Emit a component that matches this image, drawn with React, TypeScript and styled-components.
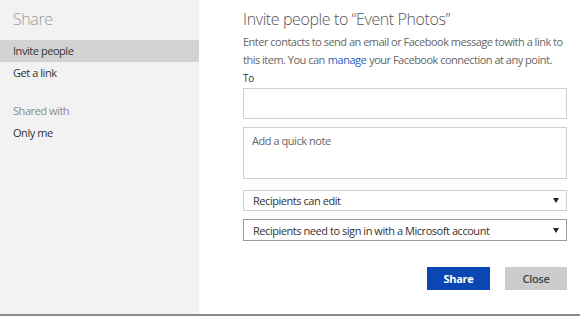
import React from "react";
import styled, { createGlobalStyle } from "styled-components";

const Global = createGlobalStyle`
  html, body { margin: 0; padding: 0; background: #fff; }
  body { font-family: "Open Sans", "Noto Sans", sans-serif; }
  * { box-sizing: border-box; }
`;

const Page = styled.div`
  width: 580px;
  height: 316px;
  display: flex;
  flex-direction: column;
  overflow: hidden;
`;

const Body = styled.div`
  flex: 1;
  display: flex;
  min-height: 0;
`;

const BottomRule = styled.div`
  height: 2px;
  background: #8a8a8a;
`;

const Sidebar = styled.nav`
  width: 199px;
  background: #f2f2f2;
  display: flex;
  flex-direction: column;
  padding-top: 8px;
`;

const SideTitle = styled.div`
  font-size: 16px;
  font-weight: 300;
  letter-spacing: -0.4px;
  color: #9a9a9a;
  padding-left: 13px;
  line-height: 22px;
  margin-bottom: 10px;
`;

const SideItem = styled.div<{ $active?: boolean; $muted?: boolean }>`
  height: 22px;
  line-height: 22px;
  padding-left: 13px;
  font-size: 11px;
  letter-spacing: -0.45px;
  color: ${(p) => (p.$muted ? "#8a8a8a" : "#333")};
  background: ${(p) => (p.$active ? "#d3d3d3" : "transparent")};
`;

const SideGap = styled.div`
  height: 16px;
`;

const Main = styled.main`
  flex: 1;
  padding: 8px 13px 0 44px;
  display: flex;
  flex-direction: column;
`;

const Heading = styled.h1`
  margin: 0;
  font-size: 16px;
  font-weight: 300;
  letter-spacing: -0.4px;
  color: #555;
  line-height: 22px;
`;

const Intro = styled.p`
  margin: 3px -3px 0 0;
  font-size: 11px;
  letter-spacing: -0.5px;
  line-height: 18px;
  color: #666;
`;

const Link = styled.a`
  display: inline-block;
  margin: 0 3px;
  color: #1e5fbf;
  text-decoration: none;
`;

const Label = styled.div`
  font-size: 10px;
  letter-spacing: -0.3px;
  color: #333;
  line-height: 14px;
  margin-top: 2px;
`;

const Field = styled.div<{ $h: number }>`
  height: ${(p) => p.$h}px;
  border: 1px solid #d0d0d0;
  background: #fff;
  margin-top: 3px;
  padding: 5px 8px;
  font-size: 11px;
  letter-spacing: -0.45px;
  color: #666;
`;

const NoteField = styled(Field)`
  margin-top: 8px;
`;

const Select = styled.div<{ $strong?: boolean }>`
  height: ${(p) => (p.$strong ? 22 : 21)}px;
  border: 1px solid ${(p) => (p.$strong ? "#9a9a9a" : "#d0d0d0")};
  margin-top: ${(p) => (p.$strong ? 8 : 11)}px;
  display: flex;
  align-items: center;
  justify-content: space-between;
  padding: 0 7px 0 9px;
  font-size: 11px;
  letter-spacing: -0.45px;
  color: #333;
`;

const Caret = styled.span`
  width: 0;
  height: 0;
  border-left: 3px solid transparent;
  border-right: 3px solid transparent;
  border-top: 5px solid #222;
`;

const Actions = styled.div`
  display: flex;
  justify-content: flex-end;
  gap: 15px;
  margin-top: 26px;
`;

const Button = styled.button<{ $primary?: boolean }>`
  width: ${(p) => (p.$primary ? 63 : 62)}px;
  height: 23px;
  border: none;
  padding: 0;
  font-family: inherit;
  font-size: 11px;
  letter-spacing: -0.3px;
  font-weight: ${(p) => (p.$primary ? 700 : 600)};
  color: ${(p) => (p.$primary ? "#fff" : "#444")};
  background: ${(p) => (p.$primary ? "#0a47b4" : "#cccccc")};
`;

export default function App() {
  return (
    <Page>
      <Global />
      <Body>
        <Sidebar>
          <SideTitle>Share</SideTitle>
          <SideItem $active>Invite people</SideItem>
          <SideItem>Get a link</SideItem>
          <SideGap />
          <SideItem $muted>Shared with</SideItem>
          <SideItem>Only me</SideItem>
        </Sidebar>
        <Main>
          <Heading>Invite people to “Event Photos”</Heading>
          <Intro>
            Enter contacts to send an email or Facebook message towith a link to this item. You can
            <Link href="#">manage</Link>
            your Facebook connection at any point.
          </Intro>
          <Label>To</Label>
          <Field $h={31} />
          <NoteField $h={52}>Add a quick note</NoteField>
          <Select>
            <span>Recipients can edit</span>
            <Caret />
          </Select>
          <Select $strong>
            <span>Recipients need to sign in with a Microsoft account</span>
            <Caret />
          </Select>
          <Actions>
            <Button $primary>Share</Button>
            <Button>Close</Button>
          </Actions>
        </Main>
      </Body>
      <BottomRule />
    </Page>
  );
}
